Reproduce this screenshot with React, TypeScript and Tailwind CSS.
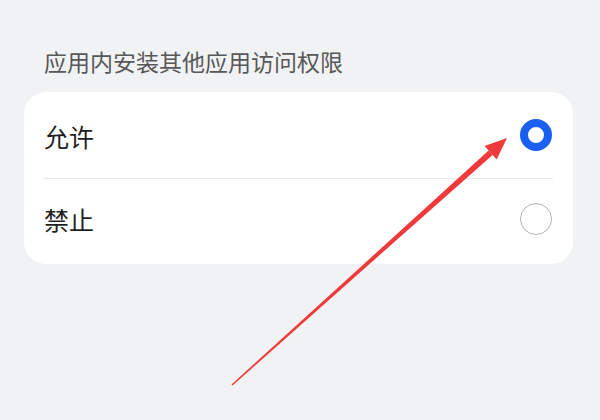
import React from "react";

export default function App() {
  const font = { fontFamily: '"Noto Sans CJK SC", "Noto Sans", sans-serif' };
  return (
    <div className="relative w-[600px] h-[420px] bg-[#f1f2f4] overflow-hidden" style={font}>
      <div className="pt-[45px] pl-[44px] text-[23px] leading-[32px] text-[#585858]">
        应用内安装其他应用访问权限
      </div>
      <div className="mt-[15px] ml-[24px] w-[549px] bg-white rounded-[22px]">
        <div className="flex items-center justify-between h-[86px] pl-[20px] pr-[21px]">
          <span className="text-[25px] text-[#1f1f1f] pt-[4px]">允许</span>
          <span className="w-[32px] h-[32px] rounded-full border-[8px] border-[#1a5ff0] bg-white" />
        </div>
        <div className="mx-[20px] h-px bg-[#e8e8e8]" />
        <div className="flex items-center justify-between h-[85px] pl-[20px] pr-[21px] pb-[6px]">
          <span className="text-[25px] text-[#1f1f1f] pt-[2px]">禁止</span>
          <span className="w-[32px] h-[32px] rounded-full border-[1.5px] border-[#b4b4b4] bg-white" />
        </div>
      </div>
      <svg className="absolute left-0 top-0 pointer-events-none" width="600" height="420" viewBox="0 0 600 420">
        <polygon points="232.5,385.5 231.5,384.5 488.6,150.5 492.6,154.9" fill="#ee3a3a" />
        <polygon points="507,138 484.6,146 496.6,159.4" fill="#ee3a3a" />
      </svg>
    </div>
  );
}
